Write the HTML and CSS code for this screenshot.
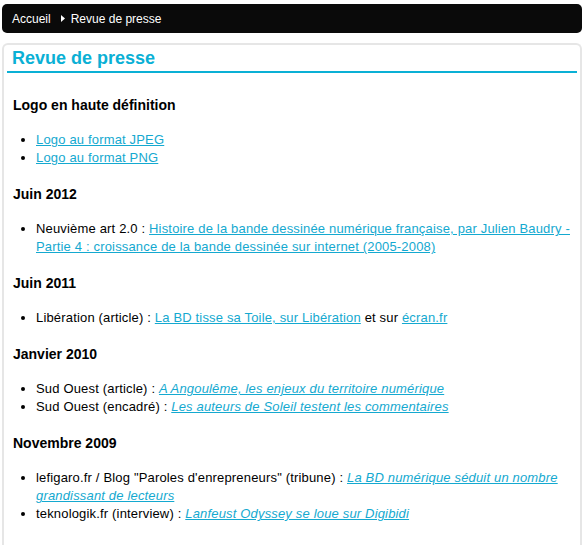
FILE: index.html
```html
<!DOCTYPE html>
<html lang="fr">
<head>
<meta charset="utf-8">
<title>Revue de presse</title>
<link rel="stylesheet" href="styles.css">
</head>
<body>
<nav class="crumbs">
  <a class="crumb" href="#">Accueil</a>
  <svg class="sep" width="4" height="7" viewBox="0 0 4 7"><path d="M0 0 L4 3.5 L0 7 Z" fill="#fff"/></svg>
  <span class="crumb">Revue de presse</span>
</nav>
<main class="box">
  <h2 class="title">Revue de presse</h2>
  <div class="content">
    <h3>Logo en haute définition</h3>
    <ul>
      <li><a href="#">Logo au format JPEG</a></li>
      <li><a href="#">Logo au format PNG</a></li>
    </ul>
    <h3>Juin 2012</h3>
    <ul>
      <li>Neuvième art 2.0 : <a href="#">Histoire de la bande dessinée numérique française, par Julien Baudry - Partie 4 : croissance de la bande dessinée sur internet (2005-2008)</a></li>
    </ul>
    <h3>Juin 2011</h3>
    <ul>
      <li>Libération (article) : <a href="#">La BD tisse sa Toile, sur Libération</a> et sur <a href="#">écran.fr</a></li>
    </ul>
    <h3>Janvier 2010</h3>
    <ul>
      <li>Sud Ouest (article) : <a class="it" href="#">A Angoulême, les enjeux du territoire numérique</a></li>
      <li>Sud Ouest (encadré) : <a class="it" href="#">Les auteurs de Soleil testent les commentaires</a></li>
    </ul>
    <h3>Novembre 2009</h3>
    <ul>
      <li>lefigaro.fr / Blog "Paroles d'enrepreneurs" (tribune) : <a class="it" href="#">La BD numérique séduit un nombre grandissant de lecteurs</a></li>
      <li>teknologik.fr (interview) : <a class="it" href="#">Lanfeust Odyssey se loue sur Digibidi</a></li>
    </ul>
  </div>
</main>
</body>
</html>
```
FILE: styles.css
```css
html, body {
  margin: 0;
  padding: 0;
  background: #fff;
}
body {
  font-family: "Liberation Sans", Arial, Helvetica, sans-serif;
  color: #000;
  padding: 4px 5px 0 2px;
}
.crumbs {
  display: flex;
  align-items: center;
  height: 29px;
  background: #0a0a0a;
  border-radius: 5px;
  padding: 0 10px;
  font-size: 12px;
}
.crumb {
  color: #fff;
  text-decoration: none;
}
.sep {
  margin: 0 6px 0 10px;
}
.box {
  margin-top: 10px;
  border: 2px solid #e6e6e6;
  border-bottom: 0;
  border-radius: 6px 6px 0 0;
  min-height: 520px;
}
.title {
  margin: 2px 3px 0;
  padding: 0 6px 2px 5px;
  font-size: 18px;
  line-height: 22px;
  font-weight: bold;
  color: #0ab0d5;
  border-bottom: 2px solid #0ab0d5;
}
.content {
  padding: 5px 9px 0 9px;
  font-size: 13px;
  line-height: 18px;
}
.content h3 {
  font-size: 14px;
  font-weight: bold;
  line-height: 18px;
  margin: 18px 0 17px;
}
.content ul {
  margin: 0;
  padding-left: 23px;
}
.content li {
  letter-spacing: 0.17px;
}
.content a {
  color: #14a9d0;
  text-decoration: underline;
}
.content a.it {
  font-style: italic;
}
```
